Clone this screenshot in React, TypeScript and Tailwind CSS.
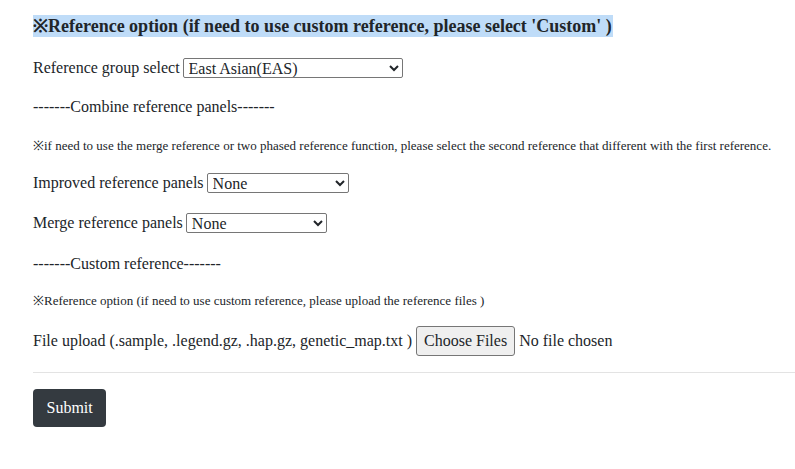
import React from 'react';

const serif = { fontFamily: '"Liberation Serif", "Times New Roman", serif' };

export default function App() {
  return (
    <div className="min-h-screen bg-white text-[#212529] text-[16px] pl-[33px] pt-[15px]" style={serif}>
      <div className="h-[22px] flex items-center">
        <span className="bg-[#bfdcf8] font-bold text-[18px] leading-[22px] pr-[1px]">
          ※Reference option (if need to use custom reference, please select 'Custom' )
        </span>
      </div>

      <div className="mt-[21px] h-[20px] flex items-center gap-[3px]">
        <span>Reference group select</span>
        <select
          defaultValue="EAS"
          className="h-[20px] w-[220px] border border-[#767676] rounded-[2px] text-[16px] leading-none px-[1px]"
        >
          <option value="EAS">East Asian(EAS)</option>
          <option value="EUR">European(EUR)</option>
          <option value="AFR">African(AFR)</option>
          <option value="Custom">Custom</option>
        </select>
      </div>

      <div className="mt-[19px] h-[20px] flex items-center">-------Combine reference panels-------</div>

      <div className="mt-[22px] h-[14px] flex items-center text-[13px]">
        ※if need to use the merge reference or two phased reference function, please select the second reference that different with the first reference.
      </div>

      <div className="mt-[20px] h-[20px] flex items-center gap-[3px]">
        <span>Improved reference panels</span>
        <select className="h-[20px] w-[142px] border border-[#767676] rounded-[2px] text-[16px] leading-none px-[1px]">
          <option>None</option>
        </select>
      </div>

      <div className="mt-[20px] h-[20px] flex items-center gap-[3px]">
        <span>Merge reference panels</span>
        <select className="h-[20px] w-[141px] border border-[#767676] rounded-[2px] text-[16px] leading-none px-[1px]">
          <option>None</option>
        </select>
      </div>

      <div className="mt-[21px] h-[20px] flex items-center">-------Custom reference-------</div>

      <div className="mt-[20px] h-[14px] flex items-center text-[13px]">
        ※Reference option (if need to use custom reference, please upload the reference files )
      </div>

      <div className="mt-[18px] h-[30px] flex items-center gap-[4px]">
        <span>File upload (.sample, .legend.gz, .hap.gz, genetic_map.txt )</span>
        <button className="h-[30px] px-[7px] bg-[#efefef] border border-[#767676] rounded-[3px]">Choose Files</button>
        <span>No file chosen</span>
      </div>

      <div className="mt-[16px] border-t border-[#e3e3e3]" />

      <button className="mt-[16px] h-[38px] px-[13.5px] bg-[#343a40] text-white rounded-[4px]">Submit</button>
    </div>
  );
}
